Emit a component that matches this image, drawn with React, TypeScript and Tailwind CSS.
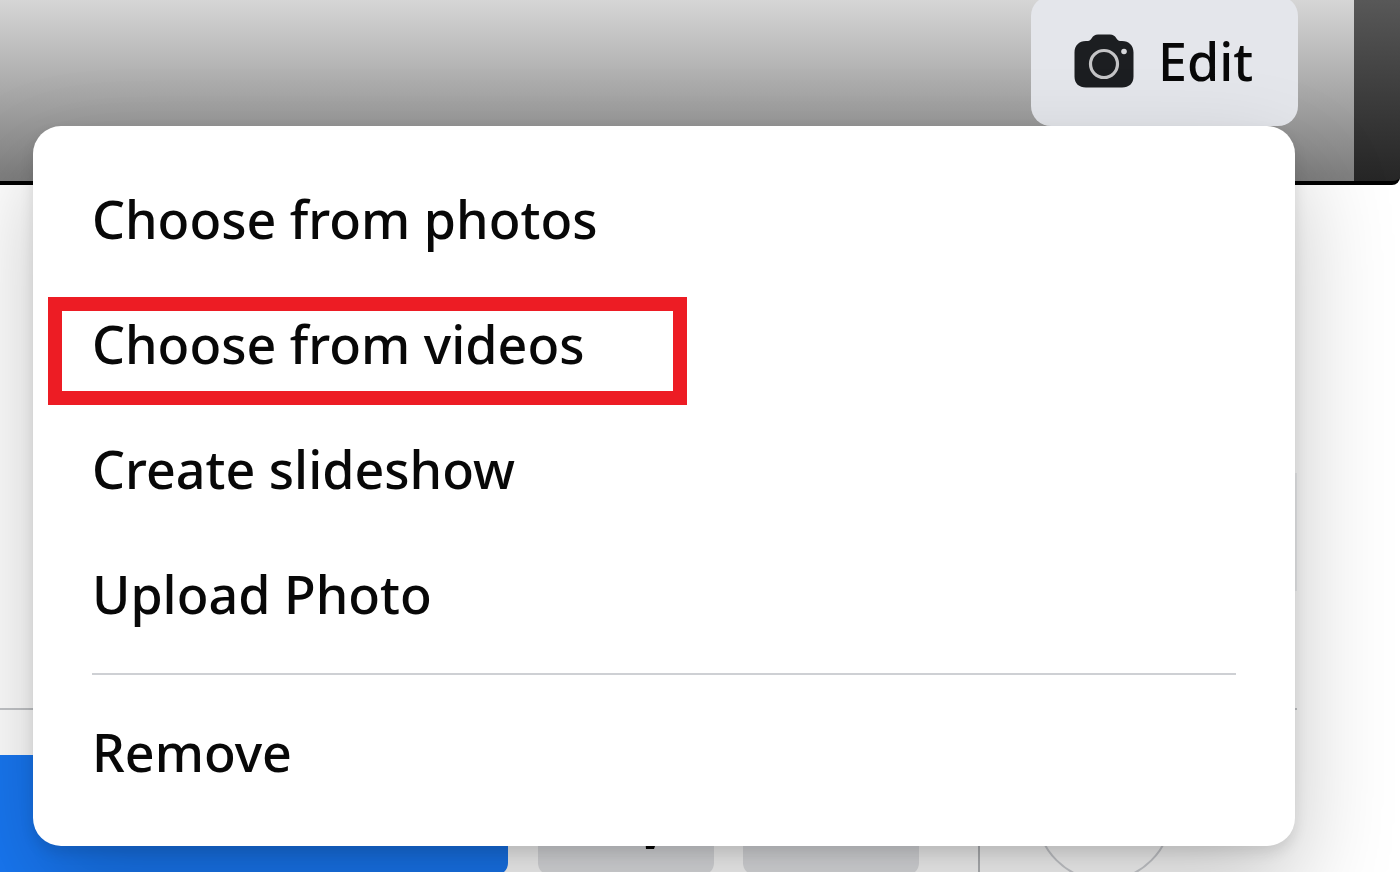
import React from "react";

type MenuItemProps = {
  label: string;
  highlighted?: boolean;
};

const CameraIcon = () => (
  <svg viewBox="0 0 60 54" className="h-[54px] w-[60px] shrink-0" aria-hidden="true">
    <path
      fill="#1c1e21"
      d="M12 7h2c1.500 0 2.500-1 3.500-2.500C19.500 1.500 21 .5 24 .5h12c3 0 4.500 1 6.500 4C43.500 6 44.500 7 46 7h2c7 0 11.500 4.500 11.500 11.500v24c0 7-4.500 11-11.500 11H12c-7 0-11.500-4-11.500-11v-24C.5 11.500 5 7 12 7z"
    />
    <circle cx="30" cy="30" r="13.500" fill="none" stroke="#c4c4c6" strokeWidth="3.200" />
    <circle cx="50" cy="17.500" r="2.800" fill="#d6d7da" />
  </svg>
);

const ChatIcon = () => (
  <svg viewBox="0 0 60 64" className="h-16 w-[60px]" aria-hidden="true">
    <path fill="#050505" d="M30 2C14 2 3 13 3 27c0 13 9 22 22 25l1 12h8l4-12c10-4 19-13 19-25C57 13 46 2 30 2z" />
  </svg>
);

const MenuItem = ({ label, highlighted }: MenuItemProps) => (
  <li className="relative">
    <button role="menuitem" className="block h-[125px] w-full px-[59px] text-left leading-[125px]">
      {label}
    </button>
    {highlighted && (
      <span className="pointer-events-none absolute top-4 left-[15px] h-[108px] w-[639px] border-[14px] border-[#ed1c24]" />
    )}
  </li>
);

const App = () => {
  return (
    <div className="relative h-screen overflow-hidden bg-white font-['Noto_Sans','Open_Sans',sans-serif] text-[52px] font-medium text-[#080808]">
      {/* Cover photo */}
      <header className="flex h-[185px] overflow-hidden rounded-br-lg border-b-4 border-black bg-black">
        <div className="flex flex-1 items-start justify-end bg-linear-to-b from-[#d6d6d6] to-[#7e7e7e] pr-14">
          <button className="-mt-1 flex h-[130px] w-[267px] items-center gap-6 rounded-[20px] bg-[#e4e6eb] pl-[43px]">
            <CameraIcon />
            <span>Edit</span>
          </button>
        </div>
        <div className="w-[46px] bg-linear-to-b from-[#585858] to-[#262626]" />
      </header>

      {/* Profile info and actions */}
      <main>
        <div className="mr-[103px] flex h-[525px] items-end justify-end border-b-2 border-[#c4c6c9] pb-[117px]">
          <div className="h-[118px] w-0.5 bg-[#f0f1f3]" />
        </div>
        <div className="flex pt-[45px]">
          <button aria-label="Add to story" className="h-[120px] w-[508px] rounded-r-xl bg-[#1877f2]" />
          <button aria-label="Message" className="ml-[30px] flex h-[120px] w-44 justify-center rounded-xl bg-[#e2e3e6] pt-[30px] pl-12">
            <ChatIcon />
          </button>
          <button aria-label="More" className="ml-[29px] h-[120px] w-44 rounded-xl bg-[#e2e3e6]" />
          <div className="ml-[59px] h-[136px] w-0.5 bg-[#b8babd]" />
          <div className="-mt-2.5 ml-14 h-[136px] w-[136px] rounded-full border-2 border-[#ced0d4]" />
        </div>
      </main>

      {/* Edit dropdown */}
      <nav
        aria-label="Edit cover"
        className="absolute top-[126px] right-[105px] left-[33px] rounded-[28px] bg-white pt-[30px] pb-8 shadow-[0_43px_100px_rgba(0,0,0,0.23),0_7px_14px_rgba(0,0,0,0.1)]"
      >
        <ul role="menu">
          <MenuItem label="Choose from photos" />
          <MenuItem label="Choose from videos" highlighted />
          <MenuItem label="Create slideshow" />
          <MenuItem label="Upload Photo" />
          <li role="separator" className="mx-[59px] mt-[17px] mb-[14px] h-0.5 bg-[#ced0d4]" />
          <MenuItem label="Remove" />
        </ul>
      </nav>
    </div>
  );
};

export default App;
